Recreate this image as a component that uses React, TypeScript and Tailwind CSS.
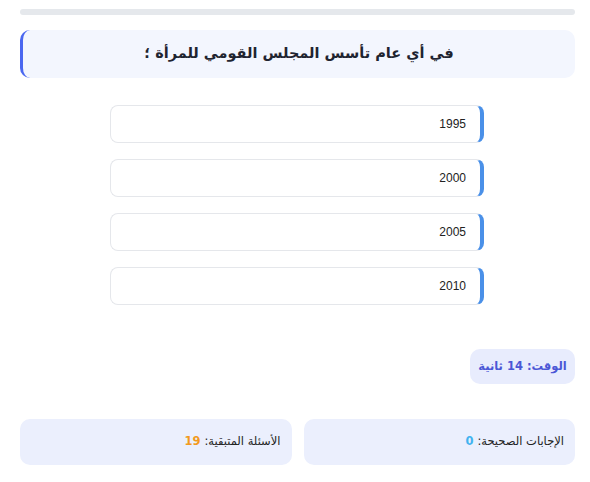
import React from 'react';

const options = ['1995', '2000', '2005', '2010'];

const App: React.FC = () => {
  return (
    <div dir="rtl" className="w-[590px] h-[482px] bg-white pl-5 pr-[15px] pt-[9px] font-['DejaVu_Sans',sans-serif]">
      <div className="h-[6px] w-full rounded-full bg-[#e5e8ec]" />

      <div className="mt-[15px] h-[48px] flex items-center justify-center rounded-[10px] bg-[#f3f6fe] border-l-[3px] border-[#4a67f0]">
        <h2 className="text-[14.5px] font-bold text-[#1f2430]">في أي عام تأسس المجلس القومي للمرأة ؛</h2>
      </div>

      <div className="mt-[27px] mr-[91px] w-[374px] flex flex-col gap-4">
        {options.map((o) => (
          <div
            key={o}
            className="h-[38px] flex items-center rounded-[8px] bg-white border border-[#e5e7eb] border-r-[4px] border-r-[#4a90e8] pr-[14px] font-['Liberation_Sans',sans-serif] text-[12px] text-[#222]"
          >
            {o}
          </div>
        ))}
      </div>

      <div className="mt-[44px] flex justify-start">
        <div className="h-[35px] w-[105px] flex items-center justify-center rounded-[10px] bg-[#e8ecfd] text-[11.5px] font-bold text-[#4b57d6]">
          الوقت: 14 ثانية
        </div>
      </div>

      <div className="mt-[35px] grid grid-cols-2 gap-3">
        <div className="h-[46px] flex items-center rounded-[10px] bg-[#ebeffd] px-[11px] text-[11.5px] text-[#222]">
          الإجابات الصحيحة: <span className="mr-1 font-bold text-[#42b3f0]">0</span>
        </div>
        <div className="h-[46px] flex items-center rounded-[10px] bg-[#ebeffd] px-[11px] text-[11.5px] text-[#222]">
          الأسئلة المتبقية: <span className="mr-1 font-bold text-[#f29a1e]">19</span>
        </div>
      </div>
    </div>
  );
};

export default App;
